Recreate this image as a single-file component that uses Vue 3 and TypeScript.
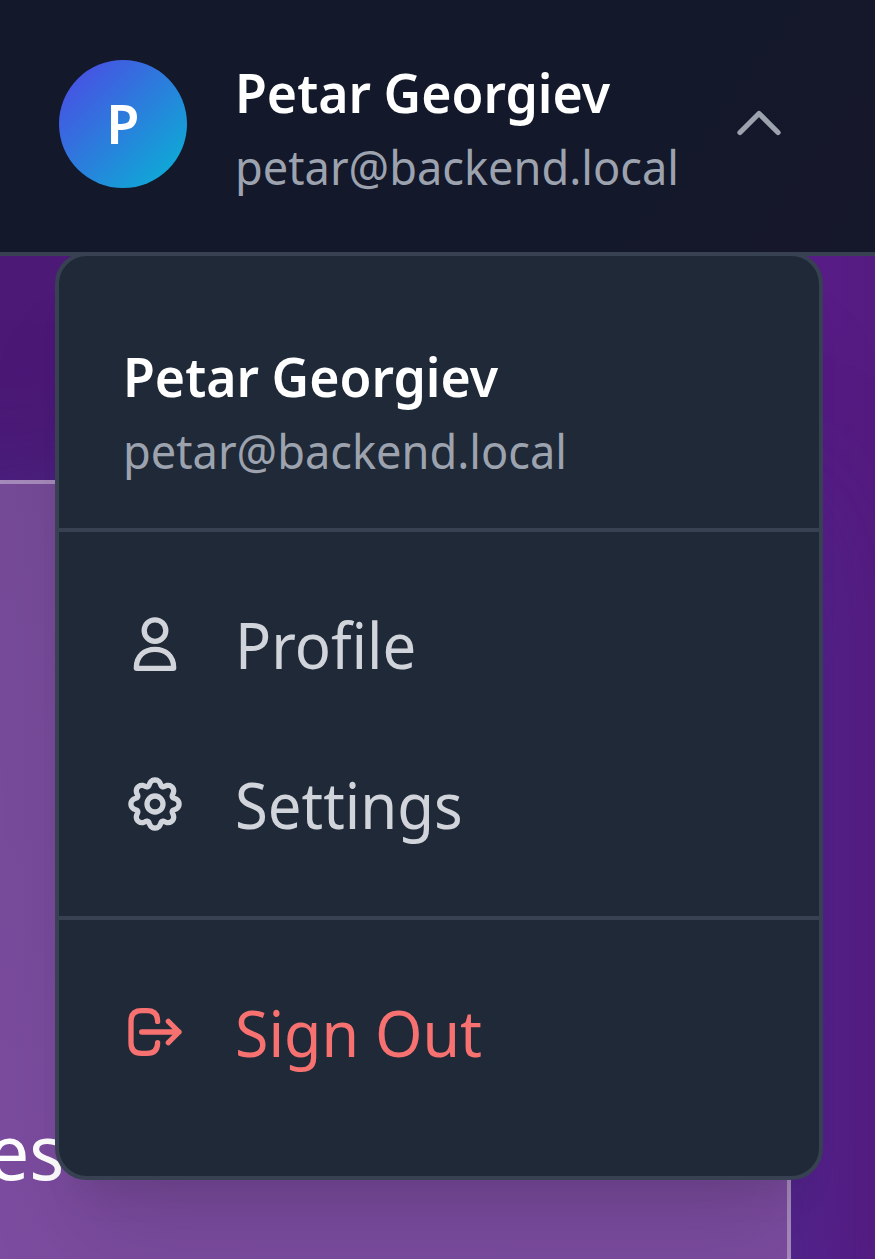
<script setup lang="ts">
const user = { name: 'Petar Georgiev', email: 'petar@backend.local', initial: 'P' }

// Eight-lobed gear outline, sampled around the icon centre.
const gearPath = (() => {
  const points: string[] = []
  for (let i = 0; i < 160; i++) {
    const a = (i / 160) * Math.PI * 2
    const r = 21.4 + 2.7 * Math.cos(8 * a)
    const b = a + 0.045 * Math.sin(8 * a) + 0.012 * Math.sin(16 * a)
    points.push(`${(32 + r * Math.sin(b)).toFixed(2)} ${(32 - r * Math.cos(b)).toFixed(2)}`)
  }
  return `M${points.join('L')}Z`
})()
</script>

<template>
  <div class="page">
    <header class="topbar">
      <div class="avatar"><span>{{ user.initial }}</span></div>
      <div class="identity">
        <div class="name"><span>{{ user.name }}</span></div>
        <div class="email"><span>{{ user.email }}</span></div>
      </div>
      <svg class="chevron" viewBox="0 0 64 64"><path d="M13 41.5 32 22.5 51 41.5" /></svg>
    </header>

    <main class="content">
      <section class="card"><span class="card-title">es</span></section>
    </main>

    <div class="menu">
      <div class="account">
        <div class="name"><span>{{ user.name }}</span></div>
        <div class="email"><span>{{ user.email }}</span></div>
      </div>
      <nav class="group">
        <a class="item">
          <svg class="icon" viewBox="0 0 64 64">
            <circle cx="32" cy="18.6" r="10.8" />
            <path d="M13.3 55.8C13.3 44 21.4 37.3 32 37.3S50.7 44 50.7 55.8Q50.7 56.4 50 56.4H14Q13.3 56.4 13.3 55.8Z" />
          </svg>
          <span class="label profile">Profile</span>
        </a>
        <a class="item">
          <svg class="icon" viewBox="0 0 64 64">
            <path :d="gearPath" />
            <circle cx="32" cy="32" r="8" />
          </svg>
          <span class="label settings">Settings</span>
        </a>
      </nav>
      <div class="group last">
        <a class="item danger">
          <svg class="icon" viewBox="0 0 64 64">
            <path d="M34.6 21.4V21.3Q34.6 10.7 24 10.7H18.6Q8 10.7 8 21.3V42.7Q8 53.3 18.6 53.3H24Q34.6 53.3 34.6 42.7V42.6M18.7 32H56M45.3 21.3 56 32 45.3 42.7" />
          </svg>
          <span class="label signout">Sign Out</span>
        </a>
      </div>
    </div>
  </div>
</template>

<style>
body { background: #531c82; overflow: hidden; }
</style>

<style scoped>
* { box-sizing: border-box; }
.page {
  position: relative;
  width: 875px;
  height: 1259px;
  overflow: hidden;
  font-family: "Noto Sans", "Open Sans", sans-serif;
  background: linear-gradient(90deg, #4c1976 0%, #581c87 94%, #541b80 100%);
}
.topbar {
  display: flex;
  height: 256px;
  padding: 0 84px 0 59px;
  border-bottom: 4px solid #374151;
  background: linear-gradient(125deg, #13182a 75%, #16172a 92%, #14182a 100%);
}
.avatar {
  display: flex;
  align-items: center;
  justify-content: center;
  flex: none;
  width: 128px;
  height: 128px;
  margin-top: 60px;
  border-radius: 50%;
  background: linear-gradient(135deg, #4f46e5, #06b6d4);
  color: #fff;
  font-size: 55px;
  font-weight: 600;
  line-height: 128px;
}
.avatar span { transform: translateY(-1px) scaleX(.98); }
.identity { flex: none; width: 442px; margin: 53px 0 0 48px; }
.name, .email { white-space: nowrap; }
.name span, .email span, .label { display: inline-block; transform-origin: left center; }
.name { height: 76px; line-height: 78px; font-size: 55px; font-weight: 600; color: #fff; }
.email { height: 68px; line-height: 76px; font-size: 47px; color: #9ca3af; }
.name span { word-spacing: -1px; transform: scaleX(.942); }
.email span { transform: scaleX(.961); }
.chevron {
  width: 64px;
  height: 64px;
  margin: 91px 0 0 50px;
  fill: none;
  stroke: #9ca3af;
  stroke-width: 5.3;
  stroke-linecap: round;
  stroke-linejoin: round;
}
.content { height: 1003px; padding-top: 224px; overflow: hidden; }
.card {
  width: 891px;
  height: 900px;
  margin-left: -100px;
  padding: 613px 0 0 84px;
  border: 4px solid #a68abb;
  background: linear-gradient(180deg, #754a97, #7d4ca1);
  box-shadow: 0 32px 128px rgba(68, 64, 160, .5);
}
.card-title {
  display: inline-block;
  font-size: 77px;
  line-height: 108px;
  color: #fff;
  transform: scaleX(.95);
  transform-origin: left center;
}
.menu {
  position: absolute;
  top: 252px;
  left: 55px;
  width: 768px;
  height: 928px;
  padding-top: 32px;
  border: 4px solid #374151;
  border-radius: 32px;
  background: #1f2937;
  box-shadow: 0 80px 100px -20px rgba(0, 0, 0, .1), 0 32px 40px -24px rgba(0, 0, 0, .1);
}
.account { height: 244px; padding: 49px 64px 47px; border-bottom: 4px solid #374151; }
.group { padding: 32px 0; border-bottom: 4px solid #374151; }
.group.last { border-bottom: 0; }
.item { display: flex; align-items: center; height: 160px; padding: 0 64px; gap: 48px; color: #d1d5db; }
.item.danger { color: #f87171; }
.icon {
  flex: none;
  width: 64px;
  height: 64px;
  fill: none;
  stroke: currentColor;
  stroke-width: 5.3;
  stroke-linecap: round;
  stroke-linejoin: round;
}
.label { margin-top: 2px; font-size: 63px; line-height: 86px; white-space: nowrap; }
.profile, .settings { transform: scaleX(.95); }
.signout { transform: scaleX(.966); }
</style>
